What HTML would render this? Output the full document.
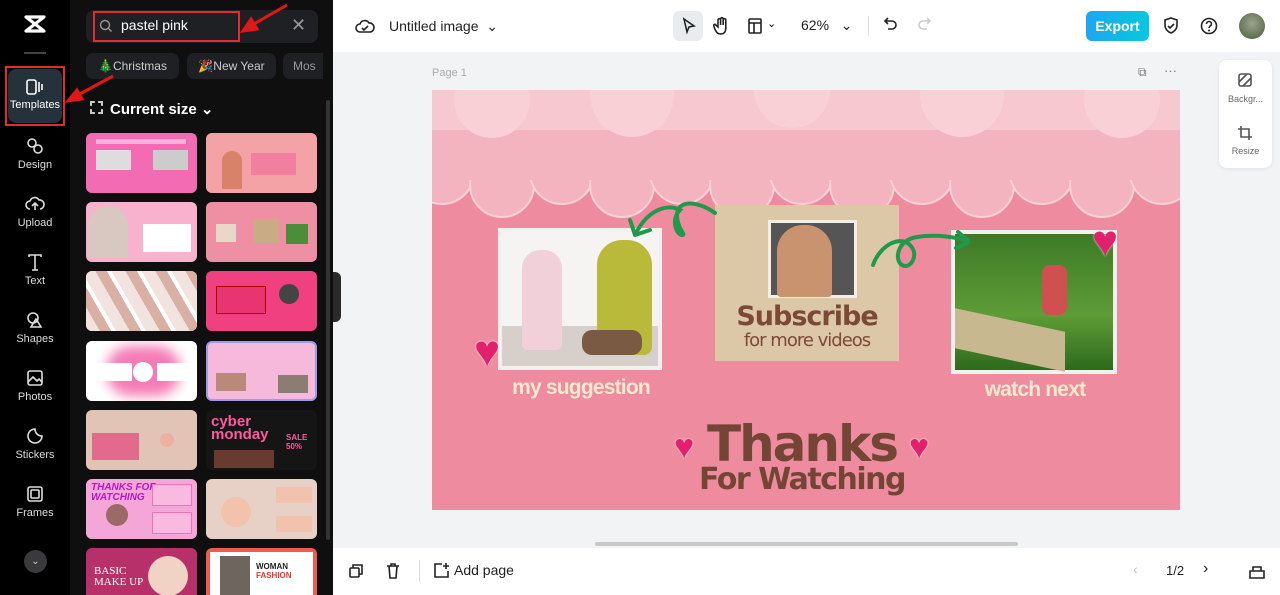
<!DOCTYPE html>
<html><head><meta charset="utf-8"><style>
*{box-sizing:border-box;margin:0;padding:0}
body{width:1280px;height:595px;overflow:hidden;font-family:"Liberation Sans",sans-serif;background:#f1f3f5;position:relative}
.abs{position:absolute}
.rail{left:0;top:0;width:70px;height:595px;background:#000}
.panel{left:70px;top:0;width:263px;height:595px;background:#0f0f10}
.ri{position:absolute;left:0;width:70px;text-align:center;color:#ddd;font-size:11px}
.ri svg{display:block;margin:0 auto 3px}
.thumb{position:absolute;width:111px;height:60px;border-radius:6px;overflow:hidden}
.top{left:333px;top:0;width:947px;height:52px;background:#fff}
.bot{left:333px;top:548px;width:947px;height:47px;background:#fff}
.ic{stroke:#222;fill:none;stroke-width:1.6}
</style></head><body>
<div class="abs rail">
 <svg class="abs" style="left:23px;top:14px" width="24" height="20" viewBox="0 0 24 20"><path d="M3 3h18L3 17h18Z" stroke="#fff" stroke-width="3.2" fill="none" stroke-linejoin="round"/></svg>
 <div class="abs" style="left:24px;top:52px;width:22px;height:2px;background:#444"></div>
 <div class="abs" style="left:5px;top:66px;width:60px;height:60px;border:2px solid #e52b2b"></div>
 <div class="abs" style="left:8px;top:69px;width:54px;height:54px;border-radius:8px;background:#25313b"></div>
 <div class="ri" style="top:78px;color:#fff"><svg width="20" height="18" viewBox="0 0 20 18" class="ic" style="stroke:#fff"><rect x="2" y="2" width="9" height="14" rx="2"/><path d="M14 4v10M17 6v6"/></svg>Templates</div>
 <div class="ri" style="top:136px"><svg width="20" height="20" viewBox="0 0 20 20" class="ic" style="stroke:#ddd"><circle cx="7" cy="7" r="4"/><circle cx="13" cy="13" r="4"/></svg>Design</div>
 <div class="ri" style="top:194px"><svg width="20" height="20" viewBox="0 0 20 20" class="ic" style="stroke:#ddd"><path d="M5 15a4 4 0 010-8 5 5 0 019 -1 4 4 0 011 9M10 9v7M7 12l3-3 3 3"/></svg>Upload</div>
 <div class="ri" style="top:252px"><svg width="20" height="20" viewBox="0 0 20 20" class="ic" style="stroke:#ddd"><path d="M4 5V3h12v2M10 3v15M7 18h6"/></svg>Text</div>
 <div class="ri" style="top:310px"><svg width="20" height="20" viewBox="0 0 20 20" class="ic" style="stroke:#ddd"><circle cx="8" cy="8" r="5"/><path d="M11 9l5 8H6z"/></svg>Shapes</div>
 <div class="ri" style="top:368px"><svg width="20" height="20" viewBox="0 0 20 20" class="ic" style="stroke:#ddd"><rect x="3" y="3" width="14" height="14" rx="2"/><path d="M3 14l5-5 4 4 2-2 3 3"/></svg>Photos</div>
 <div class="ri" style="top:426px"><svg width="20" height="20" viewBox="0 0 20 20" class="ic" style="stroke:#ddd"><path d="M17 10a7 7 0 11-7-7c0 4 3 7 7 7z"/></svg>Stickers</div>
 <div class="ri" style="top:484px"><svg width="20" height="20" viewBox="0 0 20 20" class="ic" style="stroke:#ddd"><rect x="3" y="3" width="14" height="14" rx="2"/><rect x="6" y="6" width="8" height="8" rx="1"/></svg>Frames</div>
 <div class="abs" style="left:24px;top:550px;width:23px;height:23px;border-radius:50%;background:#3a3a3c;color:#ccc;font-size:10px;text-align:center;line-height:23px">⌄</div>
</div>
<div class="abs panel">
 <div class="abs" style="left:16px;top:10px;width:232px;height:33px;border-radius:8px;background:#1f2023"></div>
 <div class="abs" style="left:23px;top:11px;width:147px;height:31px;border:2px solid #e52b2b"></div>
 <svg class="abs" style="left:29px;top:19px" width="14" height="14" viewBox="0 0 14 14"><circle cx="6" cy="6" r="4.5" stroke="#999" stroke-width="1.4" fill="none"/><path d="M9.5 9.5l3 3" stroke="#999" stroke-width="1.4"/></svg>
 <div class="abs" style="left:51px;top:17px;color:#fff;font-size:14px">pastel pink</div>
 <div class="abs" style="left:221px;top:15px;color:#999;font-size:18px">✕</div>
 <div class="abs" style="left:16px;top:53px;width:93px;height:26px;border-radius:7px;background:#1f2023;color:#ccc;font-size:12px;line-height:26px;text-align:center">🎄Christmas</div>
 <div class="abs" style="left:117px;top:53px;width:89px;height:26px;border-radius:7px;background:#1f2023;color:#ccc;font-size:12px;line-height:26px;text-align:center">🎉New Year</div>
 <div class="abs" style="left:213px;top:53px;width:40px;height:26px;border-radius:7px 0 0 7px;background:#1f2023;color:#999;font-size:12px;line-height:26px;padding-left:10px;overflow:hidden">Mos</div>
 <div class="abs" style="left:20px;top:101px;width:13px;height:13px;border:2px dashed #ccc"></div>
 <div class="abs" style="left:40px;top:100px;color:#fff;font-size:15px;font-weight:bold">Current size ⌄</div>
 <div class="abs" style="left:256px;top:100px;width:4px;height:440px;background:#333;border-radius:2px"></div>
</div>
<!-- thumbnails -->
<div class="thumb" style="left:86px;top:133px;background:#f26bb3"><div class="abs" style="left:10px;top:17px;width:35px;height:20px;background:#ddd"></div><div class="abs" style="left:67px;top:17px;width:35px;height:20px;background:#ccc"></div><div class="abs" style="left:10px;top:6px;width:90px;height:5px;background:#f9b1d8"></div></div>
<div class="thumb" style="left:206px;top:133px;background:#f5a2a7"><div class="abs" style="left:16px;top:18px;width:20px;height:38px;background:#d8826a;border-radius:10px 10px 0 0"></div><div class="abs" style="left:45px;top:20px;width:45px;height:22px;background:#f27fa0"></div></div>
<div class="thumb" style="left:86px;top:202px;background:#f8b2cd"><div class="abs" style="left:2px;top:4px;width:40px;height:52px;background:#d9c7c2;border-radius:20px 20px 0 0"></div><div class="abs" style="left:57px;top:22px;width:48px;height:28px;background:#fff"></div></div>
<div class="thumb" style="left:206px;top:202px;background:#ef8fa4"><div class="abs" style="left:10px;top:22px;width:20px;height:18px;background:#e9d7c7"></div><div class="abs" style="left:48px;top:17px;width:25px;height:24px;background:#c9ab85"></div><div class="abs" style="left:80px;top:22px;width:22px;height:20px;background:#4c8d3a"></div></div>
<div class="thumb" style="left:86px;top:271px;background:#ead2cc"><div class="abs" style="left:0;top:0;width:111px;height:60px;background:repeating-linear-gradient(60deg,#f2e3de 0 12px,#d9b0a4 12px 22px,#fff 22px 26px)"></div></div>
<div class="thumb" style="left:206px;top:271px;background:#f0407f"><div class="abs" style="left:10px;top:15px;width:50px;height:28px;background:#e83571;border:1px solid #a00"></div><div class="abs" style="left:73px;top:13px;width:20px;height:20px;border-radius:50%;background:#444"></div></div>
<div class="thumb" style="left:86px;top:341px;background:#fff"><div class="abs" style="left:20px;top:5px;width:75px;height:50px;background:#f57bb5;border-radius:30px;filter:blur(6px)"></div><div class="abs" style="left:6px;top:22px;width:40px;height:18px;background:#fff"></div><div class="abs" style="left:71px;top:22px;width:35px;height:18px;background:#fff"></div><div class="abs" style="left:47px;top:21px;width:20px;height:20px;border-radius:50%;background:#fff"></div></div>
<div class="thumb" style="left:206px;top:341px;background:#f6b9dc;border:2px solid #9b9ce8"><div class="abs" style="left:8px;top:30px;width:30px;height:18px;background:#b98a7a"></div><div class="abs" style="left:70px;top:32px;width:30px;height:18px;background:#8a7d74"></div></div>
<div class="thumb" style="left:86px;top:410px;background:#e2c4b6"><div class="abs" style="left:6px;top:23px;width:47px;height:27px;background:#e26a8c"></div><div class="abs" style="left:74px;top:23px;width:14px;height:14px;border-radius:50%;background:#f0b0a0"></div></div>
<div class="thumb" style="left:206px;top:410px;background:#151515"><div class="abs" style="left:5px;top:5px;color:#ff5aa0;font-size:15px;font-weight:bold;line-height:13px">cyber<br>monday</div><div class="abs" style="left:80px;top:23px;color:#ff5aa0;font-size:8px;font-weight:bold">SALE<br>50%</div><div class="abs" style="left:8px;top:40px;width:60px;height:18px;background:#6b3a2f"></div></div>
<div class="thumb" style="left:86px;top:479px;background:#f5a6d8"><div class="abs" style="left:5px;top:4px;color:#b319c8;font-size:10px;font-weight:bold;font-style:italic;line-height:10px">THANKS FOR<br>WATCHING</div><div class="abs" style="left:20px;top:25px;width:22px;height:22px;border-radius:50%;background:#9b6a66"></div><div class="abs" style="left:66px;top:5px;width:40px;height:22px;background:#f9b9e0;border:1px solid #f071b8"></div><div class="abs" style="left:66px;top:33px;width:40px;height:22px;background:#f9b9e0;border:1px solid #f071b8"></div></div>
<div class="thumb" style="left:206px;top:479px;background:#e7d0c5"><div class="abs" style="left:15px;top:18px;width:30px;height:30px;border-radius:50%;background:#f1c3ac"></div><div class="abs" style="left:70px;top:8px;width:36px;height:16px;background:#f1c3ac"></div><div class="abs" style="left:70px;top:37px;width:36px;height:16px;background:#f1c3ac"></div></div>
<div class="thumb" style="left:86px;top:548px;background:#b8306a;height:47px;border-radius:6px 6px 0 0"><div class="abs" style="left:8px;top:18px;color:#fff;font-size:11px;font-family:'Liberation Serif',serif;line-height:11px">BASIC<br>MAKE UP</div><div class="abs" style="left:62px;top:8px;width:40px;height:40px;border-radius:50%;background:#f0d3c4"></div></div>
<div class="thumb" style="left:206px;top:548px;background:#ef5b50;height:47px;border-radius:6px 6px 0 0"><div class="abs" style="left:4px;top:4px;width:103px;height:43px;background:#fff"></div><div class="abs" style="left:14px;top:8px;width:30px;height:39px;background:#6d655e"></div><div class="abs" style="left:50px;top:14px;color:#222;font-size:8px;font-weight:bold">WOMAN <span style="color:#e33">FASHION</span></div></div>
<div class="abs" style="left:333px;top:272px;width:8px;height:50px;background:#2a2a2a;border-radius:0 6px 6px 0"></div>
<!-- top bar -->
<div class="abs top">
 <svg class="abs" style="left:22px;top:17px" width="20" height="18" viewBox="0 0 20 18" ><path class="ic" d="M5 15a4 4 0 010-8 5 5 0 019-1 4 4 0 011 9zM7 11l2 2 4-4"/></svg>
 <div class="abs" style="left:56px;top:18px;font-size:14px;color:#222">Untitled image &nbsp;⌄</div>
 <div class="abs" style="left:340px;top:11px;width:30px;height:30px;border-radius:6px;background:#e9ecef"></div>
 <svg class="abs" style="left:348px;top:17px" width="16" height="18" viewBox="0 0 16 18"><path class="ic" d="M3 2l10 7-5 1-2 5z"/></svg>
 <svg class="abs" style="left:380px;top:16px" width="18" height="20" viewBox="0 0 18 20"><path class="ic" d="M5 11V4a1.3 1.3 0 012.6 0v5V3a1.3 1.3 0 012.6 0v6V4a1.3 1.3 0 012.6 0v8c0 4-2 6-5 6s-4-1-6-5l-1-3a1 1 0 012-1z"/></svg>
 <svg class="abs" style="left:414px;top:17px" width="16" height="18" viewBox="0 0 16 18"><rect class="ic" x="2" y="2" width="12" height="14" rx="1"/><path class="ic" d="M2 6h12M7 6v10"/></svg>
 <div class="abs" style="left:434px;top:17px;font-size:11px">⌄</div>
 <div class="abs" style="left:468px;top:17px;font-size:14px;color:#222">62% &nbsp;&nbsp;⌄</div>
 <div class="abs" style="left:535px;top:16px;width:1px;height:20px;background:#ddd"></div>
 <svg class="abs" style="left:550px;top:16px" width="16" height="18" viewBox="0 0 16 18"><path class="ic" d="M5 2L2 5l3 3M2 5h7a4 4 0 010 8H5"/></svg>
 <svg class="abs" style="left:583px;top:16px" width="16" height="18" viewBox="0 0 16 18"><path class="ic" style="stroke:#ccc" d="M11 2l3 3-3 3M14 5H7a4 4 0 000 8h4"/></svg>
 <div class="abs" style="left:753px;top:11px;width:63px;height:30px;border-radius:6px;background:linear-gradient(90deg,#1fa6f0,#08c8e0);color:#fff;font-weight:bold;font-size:14px;text-align:center;line-height:30px">Export</div>
 <svg class="abs" style="left:829px;top:16px" width="18" height="20" viewBox="0 0 18 20"><path class="ic" d="M9 2l6 2v5c0 4-3 7-6 8-3-1-6-4-6-8V4zM6 10l2 2 4-4"/></svg>
 <svg class="abs" style="left:866px;top:16px" width="20" height="20" viewBox="0 0 20 20"><circle class="ic" cx="10" cy="10" r="7.5"/><path class="ic" d="M7.5 8a2.5 2.5 0 115 0c0 2-2.5 2-2.5 4"/><circle cx="10" cy="14.5" r="1" fill="#222"/></svg>
 <div class="abs" style="left:906px;top:13px;width:26px;height:26px;border-radius:50%;background:radial-gradient(circle at 50% 40%,#9aa58c,#4b5a3c)"></div>
</div>
<div class="abs" style="left:432px;top:67px;font-size:11px;color:#aaa">Page 1</div>
<div class="abs" style="left:1138px;top:65px;font-size:12px;color:#777">⧉</div>
<div class="abs" style="left:1164px;top:63px;font-size:13px;color:#777">···</div>
<div class="abs" style="left:1219px;top:60px;width:53px;height:108px;background:#fff;border-radius:8px;box-shadow:0 1px 4px rgba(0,0,0,.08)"></div>
<svg class="abs" style="left:1237px;top:72px" width="16" height="16" viewBox="0 0 16 16"><rect class="ic" x="2" y="2" width="12" height="12" rx="2" style="stroke:#555"/><path class="ic" style="stroke:#555" d="M2 10l8-8M6 14l8-8"/></svg>
<div class="abs" style="left:1219px;top:94px;width:53px;text-align:center;font-size:9px;color:#666">Backgr...</div>
<svg class="abs" style="left:1237px;top:125px" width="16" height="16" viewBox="0 0 16 16"><path class="ic" style="stroke:#555" d="M4 1v11h11M1 4h11v11"/></svg>
<div class="abs" style="left:1219px;top:146px;width:53px;text-align:center;font-size:9px;color:#666">Resize</div>
<!-- canvas -->
<div class="abs" style="left:432px;top:90px;width:748px;height:420px;background:#ef8b9e;overflow:hidden">
 <svg class="abs" style="left:0;top:0" width="748" height="140" viewBox="0 0 748 140">
  <rect x="0" y="0" width="748" height="70" fill="#f7c8cf"/>
  <g fill="#f4b4bf" stroke="#f8d0d6" stroke-width="2">
   <circle cx="10" cy="82" r="32"/><circle cx="70" cy="95" r="32"/><circle cx="130" cy="82" r="32"/><circle cx="190" cy="95" r="32"/><circle cx="250" cy="82" r="32"/><circle cx="310" cy="95" r="32"/><circle cx="370" cy="82" r="32"/><circle cx="430" cy="95" r="32"/><circle cx="490" cy="82" r="32"/><circle cx="550" cy="95" r="32"/><circle cx="610" cy="82" r="32"/><circle cx="670" cy="95" r="32"/><circle cx="730" cy="82" r="32"/>
  </g>
  <rect x="0" y="40" width="748" height="50" fill="#f4b4bf"/>
  <g fill="#f8d0d6"><circle cx="60" cy="10" r="38"/><circle cx="200" cy="5" r="42"/><circle cx="360" cy="0" r="38"/><circle cx="530" cy="5" r="42"/><circle cx="690" cy="10" r="38"/></g>
 </svg>
 <div class="abs" style="left:66px;top:138px;width:164px;height:142px;background:#f3f1ee"></div>
 <div class="abs" style="left:70px;top:142px;width:156px;height:134px;background:linear-gradient(180deg,#f6f4f2 0 70%,#d7cfc9 70%)"></div>
 <div class="abs" style="left:90px;top:160px;width:40px;height:100px;background:#f2d0da;border-radius:18px 18px 6px 6px"></div>
 <div class="abs" style="left:165px;top:150px;width:55px;height:115px;background:#b9ba3a;border-radius:25px 25px 8px 8px"></div>
 <div class="abs" style="left:150px;top:240px;width:60px;height:25px;background:#7a5a43;border-radius:10px"></div>
 <div class="abs" style="left:283px;top:115px;width:184px;height:156px;background:#dcc7a7"></div>
 <div class="abs" style="left:336px;top:130px;width:89px;height:78px;background:#555;border:3px solid #f3eee8"></div>
 <div class="abs" style="left:345px;top:135px;width:55px;height:72px;background:#c9936f;border-radius:26px 26px 4px 4px"></div>
 <div class="abs" style="left:283px;top:213px;width:184px;text-align:center;color:#7a4a36;font-size:27px;font-weight:bold;font-family:'DejaVu Sans',sans-serif;letter-spacing:-1px;line-height:28px">Subscribe</div>
 <div class="abs" style="left:283px;top:240px;width:184px;text-align:center;color:#7a4a36;font-size:18px;font-family:'DejaVu Sans',sans-serif;letter-spacing:-1px">for more videos</div>
 <div class="abs" style="left:519px;top:140px;width:166px;height:144px;background:#f3f1ee"></div>
 <div class="abs" style="left:523px;top:144px;width:158px;height:136px;background:linear-gradient(180deg,#3d7a26,#5e9c37 60%,#2e6a1c)"></div>
 <div class="abs" style="left:523px;top:230px;width:110px;height:40px;background:#c8b890;transform:skewY(12deg)"></div>
 <div class="abs" style="left:610px;top:175px;width:25px;height:50px;background:#d05050;border-radius:8px"></div>
 <svg class="abs" style="left:185px;top:105px" width="100" height="55" viewBox="0 0 100 55"><path d="M98 18C80 5 60 5 60 20s10 20 5 20-12-15-2-25C50 8 30 15 18 40M18 40l-5-15M18 40l15-5" stroke="#1f9a4b" stroke-width="4" fill="none" stroke-linecap="round"/></svg>
 <svg class="abs" style="left:438px;top:120px" width="100" height="60" viewBox="0 0 100 60"><path d="M3 55C10 35 30 25 40 35s0 25-8 20-5-25 15-28 40 0 53 5M100 32l-12-10M100 32l-14 6" stroke="#1f9a4b" stroke-width="4" fill="none" stroke-linecap="round"/></svg>
 <div class="abs" style="left:42px;top:240px;font-size:44px;color:#e3206e;line-height:44px;text-shadow:0 0 2px #fff">♥</div>
 <div class="abs" style="left:660px;top:130px;font-size:44px;color:#e3206e;line-height:44px;text-shadow:0 0 2px #fff">♥</div>
 <div class="abs" style="left:242px;top:340px;font-size:34px;color:#e3206e;line-height:34px;text-shadow:0 0 2px #fff">♥</div>
 <div class="abs" style="left:477px;top:340px;font-size:34px;color:#e3206e;line-height:34px;text-shadow:0 0 2px #fff">♥</div>
 <div class="abs" style="left:66px;top:286px;width:166px;text-align:center;color:#fbe8cf;font-size:21px;font-weight:bold;letter-spacing:-0.8px">my suggestion</div>
 <div class="abs" style="left:520px;top:288px;width:166px;text-align:center;color:#fbe8cf;font-size:21px;font-weight:bold;letter-spacing:-0.8px">watch next</div>
 <div class="abs" style="left:270px;top:328px;width:200px;text-align:center;color:#734535;font-size:50px;font-weight:bold;font-family:'DejaVu Sans',sans-serif;letter-spacing:-2px;line-height:52px">Thanks</div>
 <div class="abs" style="left:250px;top:372px;width:240px;text-align:center;color:#734535;font-size:30px;font-weight:bold;font-family:'DejaVu Sans',sans-serif;letter-spacing:-1.5px">For Watching</div>
</div>
<div class="abs" style="left:595px;top:542px;width:423px;height:4px;border-radius:2px;background:#c8c8c8"></div>
<div class="abs bot">
 <svg class="abs" style="left:15px;top:15px" width="16" height="16" viewBox="0 0 16 16"><rect class="ic" x="2" y="5" width="9" height="9" rx="1"/><path class="ic" d="M5 5V2h9v9h-3"/></svg>
 <svg class="abs" style="left:52px;top:14px" width="16" height="18" viewBox="0 0 16 18"><path class="ic" d="M2 4h12M6 4V2h4v2M4 4l1 12h6l1-12"/></svg>
 <div class="abs" style="left:86px;top:12px;width:1px;height:22px;background:#ddd"></div>
 <svg class="abs" style="left:100px;top:14px" width="18" height="18" viewBox="0 0 18 18"><path class="ic" d="M15 9v6H2V2h7M13 1v6M10 4h6"/></svg>
 <div class="abs" style="left:121px;top:14px;font-size:14px;color:#222">Add page</div>
 <div class="abs" style="left:800px;top:13px;font-size:14px;color:#bbb">‹</div>
 <div class="abs" style="left:833px;top:15px;font-size:13px;color:#222">1/2</div>
 <div class="abs" style="left:870px;top:12px;font-size:16px;color:#222">›</div>
 <svg class="abs" style="left:915px;top:14px" width="18" height="18" viewBox="0 0 18 18"><path class="ic" d="M2 9h14v7H2zM5 9V5h8v4"/></svg>
</div>
<svg class="abs" style="left:0;top:0" width="300" height="130" viewBox="0 0 300 130"><g stroke="#e01818" stroke-width="3" fill="#e01818"><path d="M287 5L252 25"/><path d="M243 31l8-12 6 10z"/><path d="M113 76L78 95"/><path d="M68 101l9-11 5 9z"/></g></svg>
</body></html>
